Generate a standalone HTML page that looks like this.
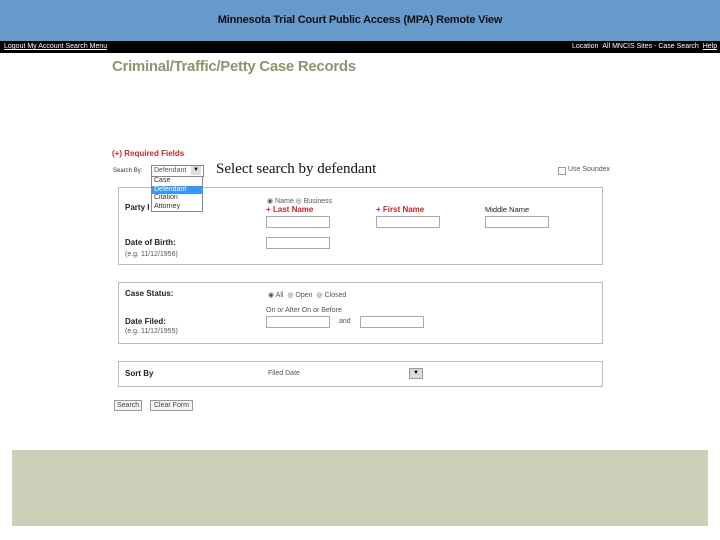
<!DOCTYPE html>
<html><head><style>
body{margin:0;width:720px;height:540px;background:#fff;position:relative;overflow:hidden;font-family:"Liberation Sans",Arial,sans-serif;}
.a{position:absolute;white-space:nowrap}
.box{position:absolute;border:1px solid #bbb;background:#fff}
.in{position:absolute;border:1px solid #aaa;background:#fff;height:10px}
.s{font-size:7px;color:#555}
.b{font-size:8px;font-weight:bold;color:#222}
.r{font-size:8px;font-weight:bold;color:#c0282d}
</style></head><body>
<div class="a" style="left:0;top:0;width:720px;height:41px;background:#6699cc"></div>
<div class="a" style="left:0;top:14px;width:720px;text-align:center;font-size:11px;font-weight:bold;color:#111;letter-spacing:-0.2px">Minnesota Trial Court Public Access (MPA) Remote View</div>
<div class="a" style="left:0;top:41px;width:720px;height:12px;background:#000"></div>
<div class="a" style="left:4px;top:43px;font-size:7px;color:#fff;text-decoration:underline">Logout My Account Search Menu</div>
<div class="a" style="left:572px;top:43px;font-size:7px;color:#fff">Location &nbsp;All MNCIS Sites - Case Search &nbsp;<u>Help</u></div>
<div class="a" style="left:112px;top:58px;font-size:15px;font-weight:bold;color:#929270;letter-spacing:-0.3px">Criminal/Traffic/Petty Case Records</div>
<div class="a r" style="left:112px;top:149px">(+) Required Fields</div>
<div class="a" style="left:113px;top:168px;font-size:6px;color:#333">Search By:</div>
<div class="a" style="left:151px;top:165px;width:49px;height:10px;border:1px solid #888;font-size:7px;color:#555;line-height:10px;padding-left:2px">Defendant</div>
<div class="a" style="left:191px;top:166px;width:10px;height:9px;background:#ddd;font-size:6px;text-align:center;line-height:9px">▼</div>
<div class="a" style="left:216px;top:161px;font-family:'Liberation Serif',serif;font-size:15px;color:#111">Select search by defendant</div>
<div class="a" style="left:558px;top:167px;width:6px;height:6px;border:1px solid #999"></div>
<div class="a" style="left:568px;top:166px;font-size:7px;color:#555">Use Soundex</div>
<div class="box" style="left:118px;top:187px;width:483px;height:76px"></div>
<div class="a b" style="left:125px;top:203px">Party I</div>
<div class="a" style="left:151px;top:176px;width:50px;height:34px;border:1px solid #888;background:#fff;font-size:7px;line-height:8.5px;color:#333">
<div style="padding-left:2px">Case</div><div style="background:#3399ff;color:#fff;padding-left:2px">Defendant</div><div style="padding-left:2px">Citation</div><div style="padding-left:2px">Attorney</div></div>
<div class="a s" style="left:267px;top:197px">◉ Name ◎ Business</div>
<div class="a r" style="left:266px;top:205px">+ Last Name</div>
<div class="a r" style="left:376px;top:205px">+ First Name</div>
<div class="a b" style="left:485px;top:205px;font-weight:normal;font-size:7.5px">Middle Name</div>
<div class="in" style="left:266px;top:216px;width:62px"></div>
<div class="in" style="left:376px;top:216px;width:62px"></div>
<div class="in" style="left:485px;top:216px;width:62px"></div>
<div class="a b" style="left:125px;top:238px">Date of Birth:</div>
<div class="a s" style="left:125px;top:251px">(e.g. 11/12/1956)</div>
<div class="in" style="left:266px;top:237px;width:62px"></div>
<div class="box" style="left:118px;top:282px;width:483px;height:60px"></div>
<div class="a b" style="left:125px;top:289px">Case Status:</div>
<div class="a s" style="left:268px;top:291px">◉ All &nbsp;◎ Open &nbsp;◎ Closed</div>
<div class="a s" style="left:266px;top:307px">On or After On or Before</div>
<div class="a b" style="left:125px;top:317px">Date Filed:</div>
<div class="a s" style="left:125px;top:328px">(e.g. 11/12/1955)</div>
<div class="in" style="left:266px;top:316px;width:62px"></div>
<div class="a s" style="left:339px;top:318px">and</div>
<div class="in" style="left:360px;top:316px;width:62px"></div>
<div class="box" style="left:118px;top:361px;width:483px;height:24px"></div>
<div class="a b" style="left:125px;top:369px">Sort By</div>
<div class="a s" style="left:268px;top:370px">Filed Date</div>
<div class="a" style="left:409px;top:368px;width:12px;height:9px;border:1px solid #999;background:#ddd;font-size:6px;text-align:center;line-height:9px">▼</div>
<div class="a" style="left:114px;top:400px;border:1px solid #999;background:#f4f4f4;font-size:7px;color:#444;padding:1px 2px">Search</div>
<div class="a" style="left:150px;top:400px;border:1px solid #999;background:#f4f4f4;font-size:7px;color:#444;padding:1px 3px">Clear Form</div>
<div class="a" style="left:12px;top:450px;width:696px;height:76px;background:#cbd0b8"></div>
</body></html>
